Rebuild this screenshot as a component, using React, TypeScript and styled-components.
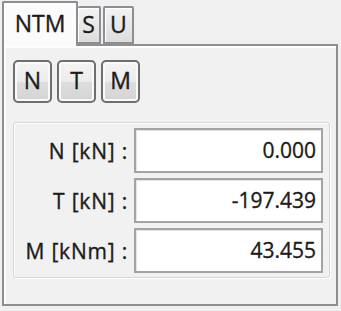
import React from 'react'
import styled, { createGlobalStyle } from 'styled-components'

const GlobalStyle = createGlobalStyle`
  body {
    margin: 0;
    background: #f0f0f0;
    font-family: 'Open Sans', 'Noto Sans', sans-serif;
    color: #1b1b1b;
    -webkit-text-stroke: 0.35px #1b1b1b;
  }
`

const Window = styled.div`
  width: 341px;
  height: 311px;
  padding: 1px 0 0 2px;
  box-sizing: border-box;
`

const TabStrip = styled.div`
  display: flex;
  align-items: flex-end;
  height: 43px;
  position: relative;
  z-index: 1;
`

const Tab = styled.div<{ $active?: boolean; $width: number; $gap?: boolean }>`
  box-sizing: border-box;
  display: flex;
  align-items: center;
  justify-content: center;
  width: ${(p) => p.$width}px;
  height: ${(p) => (p.$active ? '45px' : '38px')};
  margin-bottom: ${(p) => (p.$active ? '-2px' : '0')};
  margin-left: ${(p) => (p.$gap ? '2px' : '0')};
  padding-bottom: ${(p) => (p.$active ? '3px' : '2px')};
  border: 2px solid #8c8e94;
  border-bottom: ${(p) => (p.$active ? 'none' : '2px solid #8c8e94')};
  border-left: ${(p) => (p.$active || p.$gap ? '2px solid #8c8e94' : 'none')};
  border-radius: 2px 2px 0 0;
  background: ${(p) =>
    p.$active ? '#fbfbfb' : 'linear-gradient(#f3f3f3, #e6e6e6 60%, #dcdcdc)'};
  box-shadow: inset 1px 1px 0 #ffffff;
  font-size: 23px;
  line-height: 1;
`

const Panel = styled.div`
  box-sizing: border-box;
  width: 336px;
  height: 262px;
  border: 2px solid #8f8f8f;
  background: #f1f1f1;
  box-shadow: inset 2px 2px 0 #ffffff;
  padding: 14px 6px 0 9px;
`

const ButtonRow = styled.div`
  display: flex;
  gap: 5px;
`

const ToolButton = styled.button`
  box-sizing: border-box;
  width: 39px;
  height: 43px;
  padding: 0 0 2px;
  border: 2px solid #6f6f6f;
  border-radius: 5px;
  background: linear-gradient(#f4f4f4, #ebebeb 50%, #dddddd 52%, #d4d4d4);
  box-shadow: inset 0 0 0 2px #fafafa;
  font-family: inherit;
  font-size: 23px;
  color: #1b1b1b;
  line-height: 1;
`

const GroupBox = styled.div`
  box-sizing: border-box;
  margin-top: 19px;
  width: 317px;
  padding: 5px 6px 4px 0;
  border: 1px solid #d6d6d6;
  border-radius: 3px;
  box-shadow: inset 1px 1px 0 #ffffff, 1px 1px 0 #ffffff;
  display: flex;
  flex-direction: column;
  gap: 5px;
`

const Row = styled.div`
  display: grid;
  grid-template-columns: 114px 1fr;
  column-gap: 6px;
  align-items: center;
`

const Label = styled.label`
  text-align: right;
  font-size: 21px;
  letter-spacing: 0.8px;
  white-space: nowrap;
`

const ValueBox = styled.div`
  box-sizing: border-box;
  height: 45px;
  border: 2px solid #a3a3a3;
  background: #ffffff;
  box-shadow: inset 1px 1px 0 #e3e3e3;
  display: flex;
  align-items: center;
  justify-content: flex-end;
  padding: 0 5px 2px;
  font-size: 21px;
`

const forces = [
  { label: 'N [kN] :', value: '0.000' },
  { label: 'T [kN] :', value: '-197.439' },
  { label: 'M [kNm] :', value: '43.455' },
]

const App: React.FC = () => {
  return (
    <>
      <GlobalStyle />
      <Window>
        <TabStrip>
          <Tab $active $width={76}>NTM</Tab>
          <Tab $width={23}>S</Tab>
          <Tab $width={31} $gap>U</Tab>
        </TabStrip>
        <Panel>
          <ButtonRow>
            <ToolButton>N</ToolButton>
            <ToolButton>T</ToolButton>
            <ToolButton>M</ToolButton>
          </ButtonRow>
          <GroupBox>
            {forces.map((f) => (
              <Row key={f.label}>
                <Label>{f.label}</Label>
                <ValueBox>{f.value}</ValueBox>
              </Row>
            ))}
          </GroupBox>
        </Panel>
      </Window>
    </>
  )
}

export default App
